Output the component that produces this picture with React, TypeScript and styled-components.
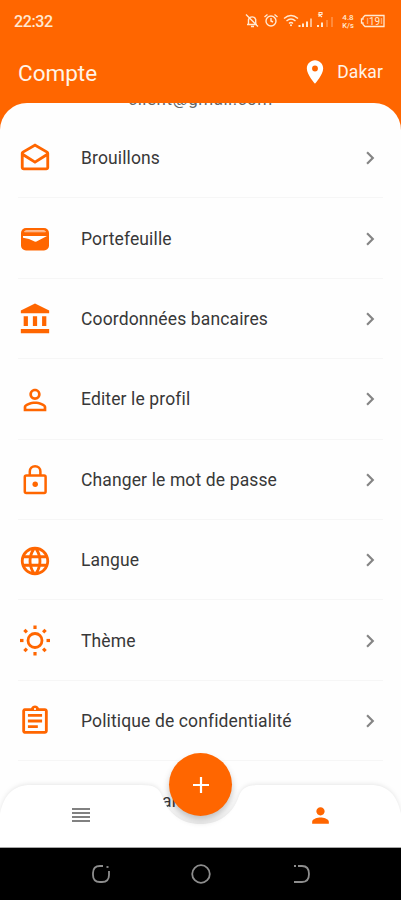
import React from 'react';
import styled, { createGlobalStyle } from 'styled-components';
import {
  MdOutlineDrafts, MdAccountBalance, MdPersonOutline, MdLanguage,
  MdOutlineAssignment, MdChevronRight, MdPerson, MdLocationOn, MdReorder,
} from 'react-icons/md';

const ORANGE = '#ff6600';

const GlobalStyle = createGlobalStyle`
  *{box-sizing:border-box}
  body{margin:0;font-family:Roboto,"Liberation Sans",sans-serif;background:#fff}
  svg{display:block;flex:none}
`;
const Screen = styled.div`
  width:401px;height:900px;display:flex;flex-direction:column;
  background:${ORANGE};overflow:hidden;position:relative;
`;
const StatusBar = styled.div`
  height:42px;padding:0 13px 0 14px;display:flex;align-items:center;
  justify-content:space-between;color:#ffe9d2;
`;
const Clock = styled.span`font-size:16px;font-weight:500;letter-spacing:-.35px;line-height:20px;padding-top:1px;`;
const AppBar = styled.header`
  height:61px;padding:0 18px;display:flex;align-items:center;
  justify-content:space-between;color:#fff4e8;
`;
const Title = styled.h1`margin:0;font-size:22.5px;font-weight:400;letter-spacing:0;line-height:30px;`;
const Place = styled.div`
  display:flex;align-items:center;gap:8px;font-size:17.5px;letter-spacing:.1px;margin-top:-2px;
`;
const Panel = styled.main`
  height:744px;background:#fefefe;border-radius:27px 27px 0 0;overflow:hidden;
  display:flex;flex-direction:column;
`;
const Email = styled.div`
  height:15px;display:flex;align-items:flex-end;justify-content:center;
  font-size:17px;line-height:20px;letter-spacing:.5px;color:#666;flex:none;
  padding-bottom:9px;
`;
const Row = styled.div`
  height:80.4px;flex:none;margin:0 18px;display:flex;align-items:center;
  border-bottom:1.5px solid #f6f6f6;color:${ORANGE};
  > svg:first-child{position:relative;top:1px}
`;
const Label = styled.span`
  flex:1;margin-left:29px;font-size:17.5px;letter-spacing:.13px;color:#383838;
  line-height:22px;padding-top:1px;white-space:nowrap;
`;
const HiddenLabel = styled(Label)`margin-left:144px;`;
const Chevron = styled(MdChevronRight)`color:#858585;margin-top:1px;`;
const TabArea = styled.div`
  position:absolute;left:0;right:0;bottom:53px;height:64px;
  filter:drop-shadow(0 -1px 2px rgba(0,0,0,.09));
`;
const TabBar = styled.nav`
  height:64px;display:flex;justify-content:space-between;align-items:center;
  background:#fff;padding:0 68px 0 69px;color:#818181;
  clip-path:path('M0 64V31C4 12 13 2 31 2H141C154 2 159 5 162 13C168 31 182 41 200.5 41C219 41 233 31 239 13C242 5 247 2 260 2H370C388 2 397 12 401 31V64Z');
`;
const ActiveTab = styled.span`color:${ORANGE};`;
const AddButton = styled.button`
  position:absolute;left:169px;top:753px;width:63px;height:63px;border:0;padding:0;
  border-radius:50%;background:${ORANGE};color:#fff;display:grid;place-items:center;
  box-shadow:0 5px 7px rgba(0,0,0,.23);
`;
const SystemBar = styled.footer`
  height:53px;background:#000;border-top:1px solid #aaa;
  display:flex;align-items:center;justify-content:center;gap:76px;color:#8d8d8d;
`;

const StatusIcons = () => (
  <svg width="144" height="20" viewBox="0 0 144 20" fill="none" stroke="currentColor" strokeWidth="1.4">
    <path d="M3 13.500h10M4.500 13V8.500a3.800 3.800 0 0 1 7.200 0V13M7 15.500h3M2 3.500l12 12" />
    <circle cx="27" cy="10" r="5" /><path d="M27 7v3l2 1M20.500 6l3-2.500M33.500 6l-3-2.500" />
    <path d="M40 7.500q7-6 14 0M42.500 10q4.500-4 9 0M45 12.500q2-2 4 0" />
    <circle cx="47" cy="14.200" r="1" fill="currentColor" stroke="none" />
    <g strokeWidth="2"><path d="M55.500 14v2M59 12.500V16M63 10.500V16" /><path d="M67 7.500V16" opacity=".65" /></g>
    <path d="M75 6V1.500h3v2h-3l3 2.500" strokeWidth="1.100" />
    <g strokeWidth="2"><path d="M74 14v2M78 11.500V16" /><path d="M83 9V16M88 6V16" opacity=".28" /></g>
    <g fill="currentColor" stroke="none" fontFamily="Roboto" fontWeight="500" fontSize="8" textAnchor="middle">
      <text x="104" y="9">4.8</text><text x="104" y="17" fontSize="7.500">K/s</text>
      <text x="130.500" y="13.700" fontSize="10" fontWeight="400">19</text>
    </g>
    <path d="M121 4.500h19v11h-19l-2-2v-1.500h-1.500V8H119V6.500z" strokeWidth="1.300" />
    <path d="M123.500 7v6M137.500 7v6" opacity=".5" />
  </svg>
);
const WalletIcon = () => (
  <svg width="34" height="34" viewBox="0 0 34 34">
    <rect x="3" y="6" width="28" height="22.500" rx="5" fill="currentColor" />
    <path d="M6.500 9.800Q7 8.500 9 8.500H25Q27 8.500 27.500 9.800Z" fill="#ffbc91" stroke="#ffbc91" strokeWidth="1" />
    <path d="M5 14H29L18.500 19.500Q17 20 15.500 19L11 17L5 15.800Z" fill="#fff" />
  </svg>
);
const LockIcon = () => (
  <svg width="34" height="34" viewBox="0 0 34 34" fill="none" stroke="currentColor" strokeWidth="2.500">
    <rect x="6.800" y="12.500" width="20.800" height="17.500" rx="1.500" />
    <path d="M11.800 12.500V8.500a5.300 5.300 0 0 1 10.600 0V12.500" />
    <circle cx="17.200" cy="21.200" r="2.700" fill="currentColor" stroke="none" />
  </svg>
);
const SunIcon = () => (
  <svg width="34" height="34" viewBox="0 0 34 34" fill="none" stroke="currentColor" strokeWidth="2.800">
    <circle cx="17" cy="16.500" r="7" />
    {[0, 45, 90, 135, 180, 225, 270, 315].map(a => (
      <path key={a} d="M17 1.500V5" strokeWidth="3.200" transform={`rotate(${a} 17 16.500)`} />
    ))}
  </svg>
);

const items: { label: string; icon: React.ReactNode }[] = [
  { label: 'Brouillons', icon: <MdOutlineDrafts size={34} /> },
  { label: 'Portefeuille', icon: <WalletIcon /> },
  { label: 'Coordonnées bancaires', icon: <MdAccountBalance size={34} /> },
  { label: 'Editer le profil', icon: <MdPersonOutline size={34} /> },
  { label: 'Changer le mot de passe', icon: <LockIcon /> },
  { label: 'Langue', icon: <MdLanguage size={34} /> },
  { label: 'Thème', icon: <SunIcon /> },
  { label: 'Politique de confidentialité', icon: <MdOutlineAssignment size={34} /> },
];

export default function App() {
  return (
    <Screen>
      <GlobalStyle />
      <StatusBar><Clock>22:32</Clock><StatusIcons /></StatusBar>
      <AppBar>
        <Title>Compte</Title>
        <Place><MdLocationOn size={28} color="#fff" />Dakar</Place>
      </AppBar>
      <Panel>
        <Email>client@gmail.com</Email>
        {items.map(item => (
          <Row key={item.label}>
            {item.icon}
            <Label>{item.label}</Label>
            <Chevron size={26} />
          </Row>
        ))}
        <Row><HiddenLabel>art</HiddenLabel></Row>
      </Panel>
      <SystemBar>
        <svg width="24" height="24" viewBox="0 0 24 24" fill="none" stroke="currentColor" strokeWidth="1.800">
          <path d="M14 4H11Q4 4 4 11V13Q4 20 11 20H13Q20 20 20 13V9" /><path d="M17.500 5h2" />
        </svg>
        <svg width="24" height="24" viewBox="0 0 24 24" fill="none" stroke="currentColor" strokeWidth="1.800">
          <circle cx="12" cy="12" r="8.800" />
        </svg>
        <svg width="24" height="24" viewBox="0 0 24 24" fill="none" stroke="currentColor" strokeWidth="1.800">
          <path d="M9 4H13Q20 4 20 12T13 20H5" /><path d="M5 4h2" />
        </svg>
      </SystemBar>
      <TabArea>
        <TabBar>
          <MdReorder size={24} />
          <ActiveTab><MdPerson size={25} /></ActiveTab>
        </TabBar>
      </TabArea>
      <AddButton aria-label="Ajouter">
        <svg width="18" height="18" viewBox="0 0 18 18" fill="none" stroke="currentColor" strokeWidth="2.200"><path d="M9 1V17M1 9H17" /></svg>
      </AddButton>
    </Screen>
  );
}
